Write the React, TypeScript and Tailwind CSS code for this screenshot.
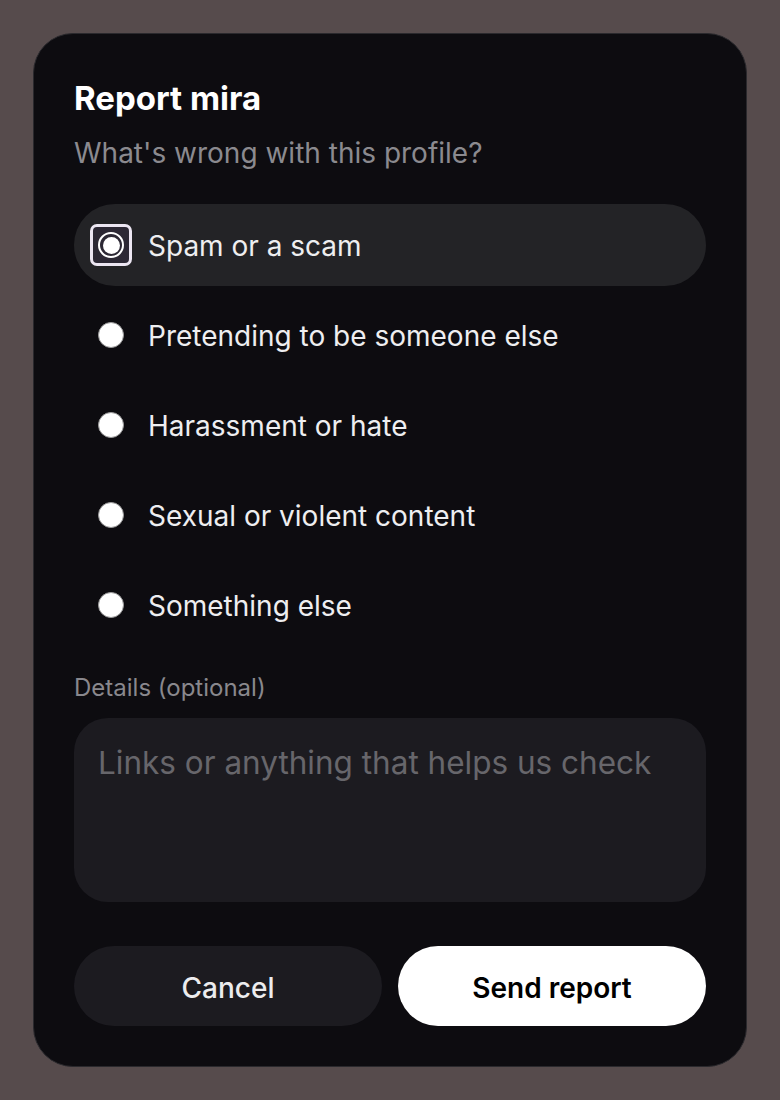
import React, { useState } from 'react';

const reasons = [
  'Spam or a scam',
  'Pretending to be someone else',
  'Harassment or hate',
  'Sexual or violent content',
  'Something else',
];

function Radio({ checked }: { checked: boolean }) {
  if (checked) {
    return (
      <div className="w-[42px] h-[42px] rounded-[7px] border-[3px] border-[#ece6f2] bg-[#2c2834] flex items-center justify-center shrink-0">
        <div className="w-[26px] h-[26px] rounded-full border-2 border-white flex items-center justify-center">
          <div className="w-[17px] h-[17px] rounded-full bg-white" />
        </div>
      </div>
    );
  }
  return (
    <div className="w-[42px] h-[42px] flex items-center justify-center shrink-0">
      <div className="w-[26px] h-[26px] rounded-full bg-white border border-[#9a9a9a]" />
    </div>
  );
}

export default function App() {
  const [selected, setSelected] = useState(0);
  const [details, setDetails] = useState('');

  return (
    <div
      className="min-h-screen w-full bg-[#564b4c] flex items-center justify-center"
      style={{ fontFamily: 'Inter, "Noto Sans", sans-serif' }}
    >
      <div className="w-[714px] rounded-[40px] border border-[#2a292d] bg-[#0d0c10] px-[40px] pt-[40px] pb-[40px]">
        <h1 className="text-[33px] leading-[48px] font-bold text-white">Report mira</h1>
        <p className="mt-[15px] text-[28px] leading-[32px] text-[#8b8a8f]">What's wrong with this profile?</p>

        <div className="mt-[35px] flex flex-col gap-2">
          {reasons.map((r, i) => (
            <button
              key={r}
              onClick={() => setSelected(i)}
              className={`h-[82px] w-full rounded-full flex items-center gap-[16px] pl-[16px] text-left ${
                i === selected ? 'bg-[#232326]' : ''
              }`}
            >
              <Radio checked={i === selected} />
              <span className="text-[28px] text-[#eeeef0] pt-[2px]">{r}</span>
            </button>
          ))}
        </div>

        <div className="mt-[28px] text-[24px] leading-[28px] text-[#89888d]">Details (optional)</div>
        <textarea
          value={details}
          onChange={(e) => setDetails(e.target.value)}
          placeholder="Links or anything that helps us check"
          className="mt-[16px] block w-full h-[184px] resize-none rounded-[34px] bg-[#1c1b20] px-[24px] pt-[24px] text-[31.5px] leading-[42px] text-white placeholder:text-[#67666b] outline-none"
        />

        <div className="mt-[44px] flex gap-4">
          <button className="flex-1 h-[80px] rounded-full bg-[#1c1b20] pt-[3px] text-[28px] font-medium text-[#ececee]">
            Cancel
          </button>
          <button className="flex-1 h-[80px] rounded-full bg-white pt-[3px] text-[28px] font-semibold text-black">
            Send report
          </button>
        </div>
      </div>
    </div>
  );
}
